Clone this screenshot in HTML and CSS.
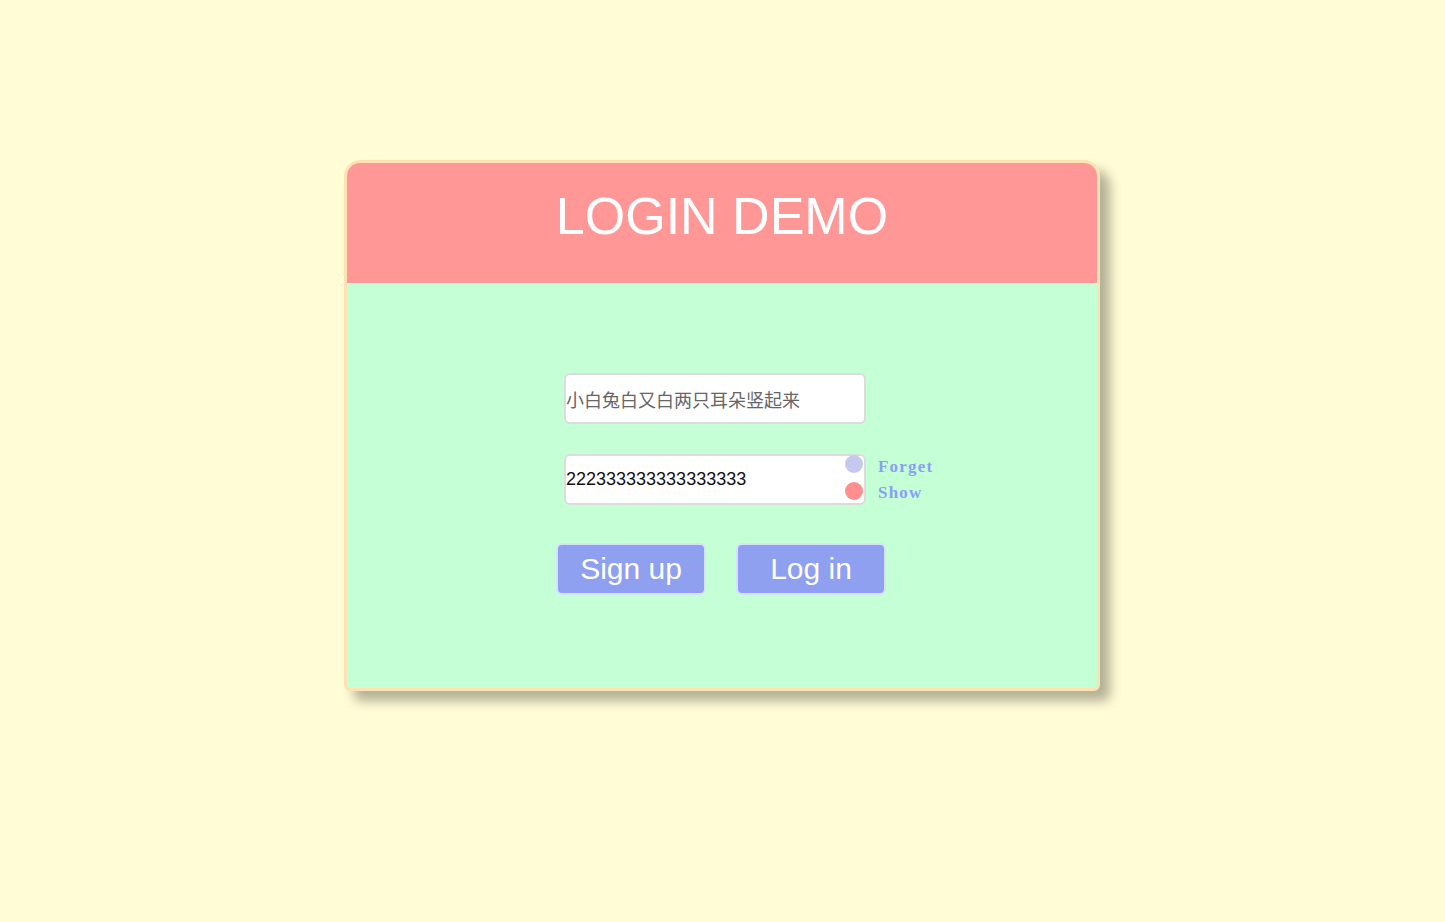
FILE: index.html
```html
<!DOCTYPE html>
<html>
<head>
<meta charset="utf-8">
<link rel="stylesheet" href="styles.css">
</head>
<body>
<div class="card">
  <div class="card-header">
    <h1 class="title">LOGIN DEMO</h1>
  </div>
  <div class="card-body">
    <input class="field field-user" type="text" placeholder="小白兔白又白两只耳朵竖起来">
    <div class="pass-row">
      <div class="pass-wrap">
        <input class="field field-pass" type="text" value="222333333333333333">
        <span class="dot dot-forget"></span>
        <span class="dot dot-show"></span>
      </div>
      <div class="links">
        <a class="link">Forget</a>
        <a class="link">Show</a>
      </div>
    </div>
    <div class="actions">
      <button class="btn">Sign up</button>
      <button class="btn">Log in</button>
    </div>
  </div>
</div>
</body>
</html>
```
FILE: styles.css
```css
html, body {
  margin: 0;
  padding: 0;
  background: #fffcd6;
}
body {
  padding-top: 160px;
  padding-right: 1px;
  height: 922px;
  box-sizing: border-box;
}
.card {
  width: 750px;
  margin: 0 auto;
  border: 3px solid #fde3b3;
  border-radius: 16px 16px 6px 6px;
  overflow: hidden;
  box-shadow: 10px 10px 12px rgba(0, 0, 0, 0.3);
  background: #c4ffd6;
}
.card-header {
  height: 120px;
  background: #ff9797;
  display: flex;
  justify-content: center;
}
.title {
  margin: 0;
  padding-top: 23px;
  font-family: "Liberation Sans", Arial, sans-serif;
  font-weight: normal;
  font-size: 52px;
  line-height: 60px;
  color: #ffffff;
}
.card-body {
  height: 405px;
  box-sizing: border-box;
  padding: 90px 0 0 217px;
  display: flex;
  flex-direction: column;
  align-items: flex-start;
}
.field {
  width: 302px;
  height: 51px;
  box-sizing: border-box;
  border: 2px solid #dcdcdc;
  border-radius: 6px;
  background: #ffffff;
  padding: 0;
  outline: none;
  font-size: 18px;
}
.field-user {
  font-family: "Noto Sans CJK SC", sans-serif;
}
.field-user::placeholder {
  color: #666666;
}
.field-pass {
  font-family: "Liberation Sans", Arial, sans-serif;
  color: #111111;
}
.pass-row {
  margin-top: 30px;
  display: flex;
  align-items: flex-start;
}
.pass-wrap {
  position: relative;
}
.dot {
  position: absolute;
  right: 3px;
  width: 18px;
  height: 18px;
  border-radius: 50%;
}
.dot-forget {
  top: 1px;
  background: #c6c9ef;
}
.dot-show {
  top: 28px;
  background: #ff8f8f;
}
.links {
  display: flex;
  flex-direction: column;
  margin-left: 12px;
}
.link {
  font-family: "Liberation Serif", "Times New Roman", serif;
  font-weight: bold;
  font-size: 17px;
  letter-spacing: 1.2px;
  line-height: 26px;
  color: #8a9ff5;
  cursor: pointer;
}
.actions {
  margin-top: 37px;
  margin-left: -8px;
  display: flex;
  gap: 30px;
}
.btn {
  width: 150px;
  height: 52px;
  box-sizing: border-box;
  border: 2px solid #d8e0ff;
  border-radius: 6px;
  background: #8fa0f0;
  color: #ffffff;
  font-family: "Liberation Sans", Arial, sans-serif;
  font-size: 30px;
  padding: 0;
  cursor: pointer;
}
```
